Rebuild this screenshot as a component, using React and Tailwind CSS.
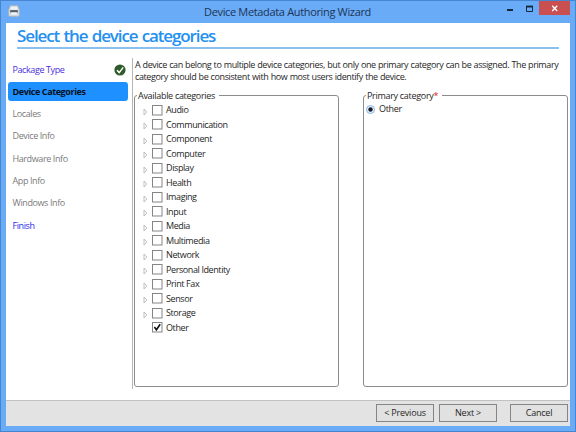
import React from "react";

const steps = [
  { label: "Package Type", kind: "done" },
  { label: "Device Categories", kind: "current" },
  { label: "Locales", kind: "todo" },
  { label: "Device Info", kind: "todo" },
  { label: "Hardware Info", kind: "todo" },
  { label: "App Info", kind: "todo" },
  { label: "Windows Info", kind: "todo" },
  { label: "Finish", kind: "link" },
];

const stepStyles = {
  done: "text-[#4a2fe0]",
  current: "bg-[#1e90ff] text-[#06101c] font-bold",
  todo: "text-[#7a7a7a]",
  link: "text-[#2a2af0]",
};

const categories = [
  "Audio", "Communication", "Component", "Computer", "Display", "Health",
  "Imaging", "Input", "Media", "Multimedia", "Network", "Personal Identity",
  "Print Fax", "Sensor", "Storage", "Other",
];

function TitleBar() {
  return (
    <header className="relative flex h-[22px] shrink-0 items-start justify-between pl-[7px] pr-[5px]">
      <svg className="mt-[4px]" width="12" height="12" viewBox="0 0 10 10">
        <path d="M2 0.5h6l1.5 3.5v4.5a1 1 0 0 1-1 1h-7a1 1 0 0 1-1-1V4z" fill="#d4dce2" stroke="#a3afb8" strokeWidth="0.6" />
        <path d="M2.5 1.5h5l0.6 2.5H2z" fill="#eef2f4" />
        <rect x="1.8" y="4.2" width="6.4" height="2" fill="#5b646c" />
        <rect x="2.8" y="6.2" width="4.4" height="1.8" fill="#f5f7f8" />
      </svg>
      <h1 className="absolute left-[203px] top-[3px] whitespace-nowrap text-[11px] leading-[15px] tracking-[-0.34px] text-[#1b3554]">
        Device Metadata Authoring Wizard
      </h1>
      <svg width="85" height="15" viewBox="0 0 85 15">
        <rect x="22" y="8" width="6" height="2" fill="#14283f" />
        <path d="M41.5 5.5h6v5h-6z" fill="none" stroke="#14283f" />
        <rect x="41" y="4.6" width="7" height="1.9" fill="#14283f" />
        <rect x="54" y="0" width="31" height="14" fill="#c94f50" />
        <path d="M67.2 4.7l5 5.2M72.2 4.7l-5 5.2" stroke="#fff" strokeWidth="1.4" />
      </svg>
    </header>
  );
}

function Step({ label, kind }) {
  return (
    <li className={"flex h-[19px] items-center justify-between rounded-[3px] pl-[4.5px] pr-[2px] " + stepStyles[kind]}>
      <span>{label}</span>
      {kind === "done" && (
        <svg width="12" height="12" viewBox="0 0 12 12">
          <circle cx="6" cy="6" r="5.6" fill="#2f5b2c" />
          <path d="M3 6.2l2.2 2.4L9.2 3.4" fill="none" stroke="#fff" strokeWidth="1.5" />
        </svg>
      )}
    </li>
  );
}

function Category({ label }) {
  const checked = label === "Other";
  return (
    <li className="flex h-[14.5px] items-center">
      <svg className="mr-[4px] mt-[3px]" width="5" height="8" viewBox="0 0 5 8">
        {!checked && <path d="M1 1l2.8 3L1 7z" fill="#fff" stroke="#b0b0b0" strokeWidth="0.8" />}
      </svg>
      <svg className="mr-[3px]" width="11" height="11" viewBox="0 0 11 11">
        <rect x="0.5" y="0.5" width="9.5" height="9.5" fill="#fff" stroke="#858585" />
        {checked && <path d="M2.4 5l2 2.8L8.2 2.3" fill="none" stroke="#111" strokeWidth="1.6" />}
      </svg>
      <span>{label}</span>
    </li>
  );
}

function Group({ title, children }) {
  return (
    <fieldset className="h-[297px] w-[205px] min-w-0 rounded-[3px] border border-[#8c8c8c]">
      <legend className="ml-[2px] h-[11px] pl-[1px] pr-[4px] leading-[11px] tracking-[-0.3px]">{title}</legend>
      {children}
    </fieldset>
  );
}

function Button({ children }) {
  return (
    <button className="flex h-[18px] w-[58px] items-center justify-center border border-[#858585] bg-[#e1e1e1] pb-px tracking-[-0.2px]">
      {children}
    </button>
  );
}

export default function App() {
  return (
    <div className="flex h-[432px] w-[576px] flex-col overflow-hidden border border-[#4685cf] bg-[#6aabf7] font-['Open_Sans','Noto_Sans',sans-serif] text-[9px] leading-[12px] tracking-[-0.4px] text-[#262626]">
      <TitleBar />
      <main className="mx-[5px] mb-[5px] flex min-h-0 flex-1 flex-col bg-white">
        <h2 className="ml-[11px] mr-[11px] h-[26px] shrink-0 whitespace-nowrap border-b-2 border-[#8bc0ee] text-[17px] font-semibold leading-[26px] tracking-[-1.12px] [word-spacing:1px] text-[#2490f0]">
          Select the device categories
        </h2>
        <div className="flex min-h-0 flex-1">
          <ul className="ml-[2px] mt-[11px] flex w-[120px] shrink-0 flex-col gap-[3.3px]">
            {steps.map((s) => <Step key={s.label} {...s} />)}
          </ul>
          <section className="ml-[4px] mt-[9px] h-[331px] flex-1 border-l border-[#b5b5b5]">
            <p className="ml-[2px] whitespace-nowrap pt-px [word-spacing:0.35px]">
              A device can belong to multiple device categories, but only one primary category can be assigned. The primary
              <br />
              category should be consistent with how most users identify the device.
            </p>
            <div className="ml-px mt-[7px] flex gap-[24px]">
              <Group title="Available categories">
                <ul className="ml-[8px] mt-[2px]">
                  {categories.map((c) => <Category key={c} label={c} />)}
                </ul>
              </Group>
              <Group title={<>Primary category<span className="text-[#e02020]">*</span></>}>
                <div className="ml-[2px] mt-[2px] flex items-center gap-[4px]">
                  <svg width="9" height="9" viewBox="0 0 9 9">
                    <circle cx="4.5" cy="4.5" r="4" fill="#eef5ff" stroke="#6f9fe0" strokeWidth="0.8" />
                    <circle cx="4.5" cy="4.5" r="2.2" fill="#101828" />
                  </svg>
                  <span className="tracking-[-0.3px]">Other</span>
                </div>
              </Group>
            </div>
          </section>
        </div>
        <footer className="flex h-[26px] shrink-0 items-start justify-end border-t border-[#c2c2c2] bg-[#e3e3e3] pr-[2px] pt-[3px]">
          <Button>&lt; Previous</Button>
          <div className="ml-[5px] mr-[13px]"><Button>Next &gt;</Button></div>
          <Button>Cancel</Button>
        </footer>
      </main>
    </div>
  );
}
